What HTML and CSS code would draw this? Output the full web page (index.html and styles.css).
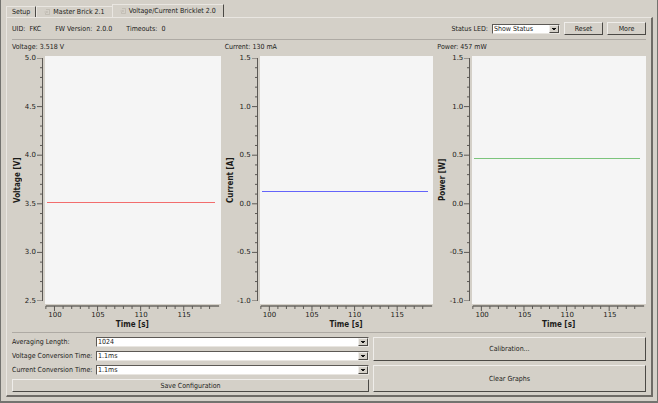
FILE: index.html
```html
<!DOCTYPE html>
<html lang="en">
<head>
<meta charset="utf-8">
<title>Voltage/Current Bricklet 2.0</title>
<link rel="stylesheet" href="styles.css">
</head>
<body>
<svg class="defs" aria-hidden="true">
  <symbol id="undock" viewBox="0 0 6 6">
    <path d="M2 .5H5.500V5.500H1.500V4M.5 3H3.500M2.500 2L3.500 3L2.500 4" fill="none" stroke="#bab6ae" stroke-width=".7"/>
  </symbol>
  <symbol id="yticks" viewBox="0 0 6 250" preserveAspectRatio="none">
    <path class="tick" d="M5.500 0V250M0 0H5.500M0 50H5.500M0 100H5.500M0 150H5.500M0 200H5.500M0 250H5.500M3 10H5.500M3 20H5.500M3 30H5.500M3 40H5.500M3 60H5.500M3 70H5.500M3 80H5.500M3 90H5.500M3 110H5.500M3 120H5.500M3 130H5.500M3 140H5.500M3 160H5.500M3 170H5.500M3 180H5.500M3 190H5.500M3 210H5.500M3 220H5.500M3 230H5.500M3 240H5.500"/>
  </symbol>
  <symbol id="xticks" viewBox="0 0 205 7" preserveAspectRatio="none">
    <path class="rule" d="M1 1H202"/>
    <path class="tick" d="M1 1V4M11 1V6M21 1V4M31 1V4M41 1V4M51 1V4M61 1V6M71 1V4M81 1V4M91 1V4M101 1V4M111 1V6M121 1V4M131 1V4M141 1V4M151 1V4M161 1V6M171 1V4M181 1V4M191 1V4"/>
  </symbol>
</svg>
<main class="window">
  <div class="tabs" role="tablist">
    <button class="tab" role="tab">Setup</button>
    <button class="tab tab-plain" role="tab"><svg class="icon"><use href="#undock"/></svg>Master Brick 2.1</button>
    <button class="tab tab-active" role="tab" aria-selected="true"><svg class="icon"><use href="#undock"/></svg>Voltage/Current Bricklet 2.0</button>
  </div>
  <section class="pane">
    <header class="info">
      <span>UID:&nbsp; FKC</span>
      <span>FW Version:&nbsp; 2.0.0</span>
      <span>Timeouts:&nbsp; 0</span>
      <div class="status">
        <label for="led">Status LED:</label>
        <div class="combo combo-led"><select id="led"><option>Show Status</option></select></div>
        <button class="btn">Reset</button>
        <button class="btn">More</button>
      </div>
    </header>
    <div class="charts">
      <article class="chart chart-voltage">
        <h2>Voltage: 3.518 V</h2>
        <div class="ytitle"><span>Voltage [V]</span></div>
        <div class="ylabels"><span>5.0</span><span>4.5</span><span>4.0</span><span>3.5</span><span>3.0</span><span>2.5</span></div>
        <svg class="yaxis"><use href="#yticks"/></svg>
        <svg class="plot" viewBox="0 0 176 247" preserveAspectRatio="none"><path stroke="#f26d6d" d="M2 145.500H170"/></svg>
        <svg class="xaxis"><use href="#xticks"/></svg>
        <div class="xlabels"><span>100</span><span>105</span><span>110</span><span>115</span></div>
        <div class="xtitle">Time [s]</div>
      </article>
      <article class="chart">
        <h2>Current: 130 mA</h2>
        <div class="ytitle"><span>Current [A]</span></div>
        <div class="ylabels"><span>1.5</span><span>1.0</span><span>0.5</span><span>0.0</span><span>-0.5</span><span>-1.0</span></div>
        <svg class="yaxis"><use href="#yticks"/></svg>
        <svg class="plot" viewBox="0 0 174 247" preserveAspectRatio="none"><path stroke="#6464fa" d="M2 134.500H168"/></svg>
        <svg class="xaxis"><use href="#xticks"/></svg>
        <div class="xlabels"><span>100</span><span>105</span><span>110</span><span>115</span></div>
        <div class="xtitle">Time [s]</div>
      </article>
      <article class="chart">
        <h2>Power: 457 mW</h2>
        <div class="ytitle"><span>Power [W]</span></div>
        <div class="ylabels"><span>1.5</span><span>1.0</span><span>0.5</span><span>0.0</span><span>-0.5</span><span>-1.0</span></div>
        <svg class="yaxis"><use href="#yticks"/></svg>
        <svg class="plot" viewBox="0 0 174 247" preserveAspectRatio="none"><path stroke="#7cc47c" d="M2 102.500H168"/></svg>
        <svg class="xaxis"><use href="#xticks"/></svg>
        <div class="xlabels"><span>100</span><span>105</span><span>110</span><span>115</span></div>
        <div class="xtitle">Time [s]</div>
      </article>
    </div>
    <form class="config">
      <div class="fields">
        <label for="avg">Averaging Length:</label>
        <div class="combo"><select id="avg"><option>1024</option></select></div>
        <label for="vct">Voltage Conversion Time:</label>
        <div class="combo"><select id="vct"><option>1.1ms</option></select></div>
        <label for="cct">Current Conversion Time:</label>
        <div class="combo"><select id="cct"><option>1.1ms</option></select></div>
        <button class="btn save" type="button">Save Configuration</button>
      </div>
      <div class="actions">
        <button class="btn" type="button">Calibration...</button>
        <button class="btn" type="button">Clear Graphs</button>
      </div>
    </form>
  </section>
</main>
</body>
</html>
```

FILE: styles.css
```css
* {
  box-sizing: border-box;
}

body {
  margin: 0;
  background: #d4d0c8;
  color: #1c1c1a;
  font: 7px/10px "DejaVu Sans Condensed", "DejaVu Sans", sans-serif;
}

button,
select {
  margin: 0;
  padding: 0;
  border: 0;
  border-radius: 0;
  color: inherit;
  font: inherit;
}

.defs {
  display: block;
  width: 0;
  height: 0;
}

.window {
  display: flex;
  flex-direction: column;
  min-height: 100vh;
  padding: 4px 4px 4px 5px;
  border: 1px solid #73736f;
  border-top: 0;
  border-bottom-width: 2px;
}

.tabs {
  display: flex;
  align-items: flex-end;
  height: 13px;
}

.tab {
  display: flex;
  align-items: center;
  height: 11px;
  padding: 0 5px;
  background: #d4d0c8;
  border-top: 1px solid #e9e6e1;
  border-left: 1px solid #e9e6e1;
  border-right: 1px solid #4b4945;
}

.tab-plain {
  padding: 0 7px;
  border-right: 0;
}

.tab-active {
  height: 13px;
  padding: 0 7px 1px;
}

.icon {
  width: 6px;
  height: 6px;
  margin-right: 3px;
}

.pane {
  display: flex;
  flex: 1;
  flex-direction: column;
  padding: 4px 5px 3px;
  border: 1px solid #e9e6e1;
  border-right: 2px solid #6e6b66;
  border-bottom: 2px solid #6e6b66;
}

.info {
  display: flex;
  align-items: center;
  gap: 14px;
  padding-bottom: 4px;
  border-bottom: 1px solid #aeaaa4;
}

.status {
  display: flex;
  align-items: center;
  gap: 4px;
  margin-left: auto;
}

.btn {
  width: 39px;
  height: 13px;
  background: #d4d0c8;
  border: 1px solid #efedea;
  border-right-color: #4b4945;
  border-bottom-color: #4b4945;
}

.combo {
  position: relative;
  height: 10px;
  background: #fff;
  border: 1px solid #5c5955;
  border-right-color: #e9e6e1;
  border-bottom-color: #e9e6e1;
}

.combo::after {
  content: "";
  position: absolute;
  top: 0;
  right: 0;
  bottom: 0;
  width: 8px;
  background: linear-gradient(#111, #111) center 2px / 4px 1px no-repeat,
    linear-gradient(#111, #111) center 3px / 2px 1px no-repeat, #d4d0c8;
  border: 1px solid #efedea;
  border-right-color: #4b4945;
  border-bottom-color: #4b4945;
  pointer-events: none;
}

.combo select {
  display: block;
  width: 100%;
  height: 100%;
  padding: 0 1px;
  background: transparent;
  line-height: 8px;
  appearance: none;
}

.combo-led {
  width: 68px;
}

.charts {
  display: grid;
  flex: 1;
  grid-template-columns: repeat(3, 1fr);
  gap: 4px;
  padding: 2px 0 1px;
  border-bottom: 1px solid #aeaaa4;
}

.chart {
  display: grid;
  grid-template-columns: 11px 14px 6px minmax(0, 1fr);
  grid-template-rows: 14px minmax(200px, 1fr) 7px 8px 12px;
  column-gap: 1px;
}

.chart-voltage {
  grid-template-columns: 11px 12px 6px minmax(0, 1fr);
}

.chart h2 {
  grid-column: 1 / -1;
  margin: 0;
  font-size: 7px;
  font-weight: normal;
}

.ytitle,
.xtitle {
  font-size: 8px;
  font-weight: bold;
  text-align: center;
}

.ytitle {
  display: flex;
  align-items: center;
  justify-content: center;
  writing-mode: vertical-rl;
  transform: rotate(180deg);
}

.ylabels,
.xlabels {
  font-family: "DejaVu Sans", sans-serif;
  line-height: 8px;
}

.ylabels {
  display: flex;
  flex-direction: column;
  justify-content: space-between;
  align-items: flex-end;
  margin: -2px 0 -1px;
  white-space: nowrap;
}

.yaxis {
  width: 6px;
  height: 0;
  min-height: calc(100% - 5px);
  margin-top: 2px;
  overflow: visible;
}

.yaxis use,
.xaxis use {
  overflow: visible;
}

.plot {
  width: calc(100% - 1px);
  height: 0;
  min-height: 100%;
  margin-left: 1px;
  background: #f5f5f5;
}

.plot path {
  shape-rendering: crispEdges;
  vector-effect: non-scaling-stroke;
}

.tick,
.rule {
  fill: none;
  stroke: #5c5955;
  vector-effect: non-scaling-stroke;
}

.rule {
  stroke: #85827c;
  stroke-width: 2px;
}

.xaxis {
  grid-column: 4;
  width: 100%;
  height: 7px;
  margin: 1px 0 0 1px;
}

.xlabels {
  display: flex;
  grid-column: 4;
  margin-left: -6%;
}

.xlabels span {
  flex: 0 0 23%;
  text-align: center;
}

.xtitle {
  grid-column: 4;
  line-height: 12px;
}

.config {
  display: grid;
  grid-template-columns: minmax(0, 357fr) minmax(0, 273fr);
  gap: 4px;
  padding-top: 4px;
}

.fields {
  display: grid;
  grid-template-columns: 84px minmax(0, 1fr);
  row-gap: 4px;
}

.save {
  grid-column: 1 / -1;
}

.actions {
  display: grid;
  grid-template-rows: 24fr 27fr;
  gap: 4px;
}

.fields .btn,
.actions .btn {
  width: 100%;
}

.actions .btn {
  height: 100%;
}
```
